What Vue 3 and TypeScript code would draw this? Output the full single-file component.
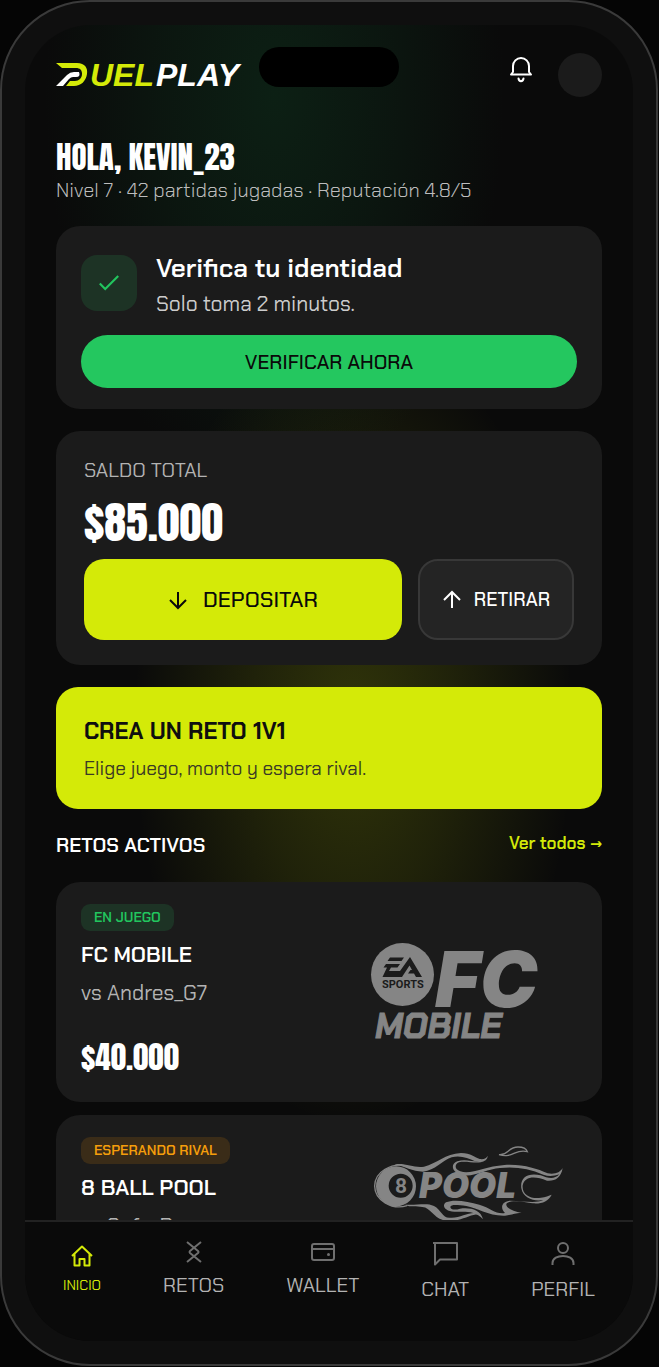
<script setup lang="ts">
import { ref } from 'vue'

interface Challenge {
  id: string
  status: string
  tone: 'live' | 'waiting'
  game: string
  rival: string
  amount?: string
}

interface NavItem {
  id: string
  label: string
}

const challenges: Challenge[] = [
  { id: 'fc', status: 'EN JUEGO', tone: 'live', game: 'FC MOBILE', rival: 'vs Andres_G7', amount: '$40.000' },
  { id: 'pool', status: 'ESPERANDO RIVAL', tone: 'waiting', game: '8 BALL POOL', rival: 'vs Sofa_Rey' },
]

const navItems: NavItem[] = [
  { id: 'inicio', label: 'INICIO' },
  { id: 'retos', label: 'RETOS' },
  { id: 'wallet', label: 'WALLET' },
  { id: 'chat', label: 'CHAT' },
  { id: 'perfil', label: 'PERFIL' },
]

const active = ref('inicio')
</script>

<template>
  <div class="phone">
    <div class="screen">
      <div class="island"></div>
      <main class="content">
        <header class="topbar">
          <svg class="brand" viewBox="0 -7 196 44" role="img" aria-label="DuelPlay">
            <path class="lime" d="M0 3H21C29 3 32 8 31 14C30 21 25 26 18 26H10L14 21H19C23 21 26 18 26 14C26 10 24 8 20 8H6Z" />
            <path class="white" d="M0 26L11 15Q14 12 18 12H23Q25 17 20 17H17Q15 17 13 19L7 26Z" />
            <text class="lime wordmark" x="34" y="26">UEL</text>
            <text class="white wordmark" x="100" y="26">PLAY</text>
          </svg>
          <div class="tools">
            <button class="bell" type="button" aria-label="Notificaciones">
              <svg viewBox="0 0 26 28">
                <path d="M3 19.500L5 17V11A8 8 0 0 1 21 11V17L23 19.500Z" />
                <path d="M10.500 23.500C11 27 15 27 15.500 23.500" />
              </svg>
            </button>
            <button class="avatar" type="button" aria-label="Cuenta"></button>
          </div>
        </header>

        <section class="hello">
          <h1>HOLA, KEVIN_23</h1>
          <p>Nivel 7 · 42 partidas jugadas · Reputación 4.8/5</p>
        </section>

        <section class="card verify">
          <div class="verify-row">
            <span class="check">
              <svg viewBox="0 0 24 24"><path d="M3.500 12.500L8.500 17.500L20.500 5.500" /></svg>
            </span>
            <div>
              <h2>Verifica tu identidad</h2>
              <p>Solo toma 2 minutos.</p>
            </div>
          </div>
          <button class="pill" type="button">VERIFICAR AHORA</button>
        </section>

        <section class="card balance">
          <p class="label">SALDO TOTAL</p>
          <p class="total">$85.000</p>
          <div class="actions">
            <button class="deposit" type="button">
              <svg viewBox="0 0 20 20"><path d="M10 2V18M2 10L10 18L18 10" /></svg>
              DEPOSITAR
            </button>
            <button class="withdraw" type="button">
              <svg viewBox="0 0 20 20"><path d="M10 18V2M2 10L10 2L18 10" /></svg>
              RETIRAR
            </button>
          </div>
        </section>

        <button class="create" type="button">
          <strong>CREA UN RETO 1V1</strong>
          <span>Elige juego, monto y espera rival.</span>
        </button>

        <div class="heading">
          <h2>RETOS ACTIVOS</h2>
          <a href="#retos">Ver todos →</a>
        </div>

        <div class="list">
          <article v-for="item in challenges" :key="item.id" class="card challenge">
            <div class="info">
              <span class="badge" :class="item.tone">{{ item.status }}</span>
              <h3>{{ item.game }}</h3>
              <p class="rival">{{ item.rival }}</p>
              <p v-if="item.amount" class="stake">{{ item.amount }}</p>
            </div>

            <svg v-if="item.id === 'fc'" class="art" viewBox="0 0 212 176" role="img" aria-label="EA Sports FC Mobile">
              <circle cx="37.500" cy="70.500" r="31.500" />
              <path class="cut" d="M25 53.500H39L36.500 57H22.500ZM21 60H35L32.500 63.500H26L24 67H35L45 53L57 73H51L49 69.500H43L45.500 66H47L44.500 61.500L37 73H17.500L22 63.500H18.500Z" />
              <text class="cut sports" x="17" y="84">SPORTS</text>
              <text class="fc" x="70" y="103">FC</text>
              <text class="mobile" x="10" y="134">MOBILE</text>
            </svg>

            <svg v-else class="art" viewBox="0 0 212 176" role="img" aria-label="8 Ball Pool">
              <g transform="scale(0.33333) translate(0 -6)">
                <path class="line" d="M124 93C80 82 29 110 29 153C29 195 80 226 126 212" />
                <path fill-rule="evenodd" d="M93 94A60 60 0 1 0 93 214A60 60 0 1 0 93 94ZM107 116A36 36 0 1 1 107 188A36 36 0 1 1 107 116Z" />
                <path d="M88 88C125 84 148 100 177 95C216 86 240 56 288 54C318 54 330 68 344 72C358 74 364 69 368 62C368 78 350 84 330 79C310 69 285 60 260 67C230 78 211 106 174 110C142 110 120 94 88 88Z" />
                <path d="M358 78C338 89 304 76 282 82C268 88 268 104 286 109C318 120 360 94 418 90C476 87 514 101 548 115C570 119 586 112 593 99C588 129 570 139 546 137C510 122 479 123 473 151C470 181 500 193 528 188C541 187 552 182 560 179C549 200 530 207 503 205C476 199 430 193 424 207C422 220 444 228 470 234C446 234 450 238 420 242C372 244 336 218 304 213C276 210 258 208 256 216C256 224 270 226 285 221C314 217 347 223 354 253C329 224 296 231 268 230C238 228 230 211 243 202C265 192 309 199 343 209C377 219 393 239 420 234C402 215 414 198 436 197C472 197 510 207 535 195C509 200 474 191 469 160C464 126 491 112 527 121C549 130 568 134 583 118C565 124 551 125 535 119C493 101 451 94 405 99C365 101 322 131 285 118C259 110 257 86 277 79C306 70 328 85 358 78Z" />
                <path d="M120 209C155 212 184 202 207 213C230 225 232 251 257 248C290 250 318 224 347 239C323 233 292 259 255 257C207 260 202 218 172 216C154 212 138 218 120 209Z" />
                <path class="line" d="M402 59C430 62 428 36 459 36C475 36 484 41 487 50C451 39 445 72 402 59Z" />
              </g>
              <text class="eight" x="30" y="56">8</text>
              <text class="pool" x="54" y="61">POOL</text>
            </svg>
          </article>
        </div>
      </main>

      <nav class="nav" aria-label="Principal">
        <button
          v-for="item in navItems"
          :key="item.id"
          type="button"
          :class="[item.id, { active: active === item.id }]"
          @click="active = item.id"
        >
          <svg v-if="item.id === 'inicio'" viewBox="0 0 24 24"><path d="M2 12L12 2.500L22 12M4.500 10V21.500H9.500V15H14.500V21.500H19.500V10" /></svg>
          <svg v-else-if="item.id === 'retos'" viewBox="0 0 24 24"><path d="M5 2L16 11Q17 12 16 13L5 22M19 2L8 11Q7 12 8 13L19 22" /></svg>
          <svg v-else-if="item.id === 'wallet'" viewBox="0 0 24 24"><rect x="1" y="4" width="22" height="16" rx="2" /><path d="M1 9H23" /><circle class="dot" cx="17.500" cy="14.500" r="1.500" /></svg>
          <svg v-else-if="item.id === 'chat'" viewBox="0 0 28 28"><path d="M2 3H26V19.500H9L4 24.500V3" /></svg>
          <svg v-else viewBox="0 0 28 28"><circle cx="14" cy="8" r="5" /><path d="M3.500 25V23C3.500 13.500 24.500 13.500 24.500 23V25" /></svg>
          <span>{{ item.label }}</span>
        </button>
      </nav>
    </div>
  </div>
</template>

<style>
body {
  margin: 0;
  background: #050505;
}
</style>

<style scoped>
* {
  box-sizing: border-box;
}

h1,
h2,
h3,
p {
  margin: 0;
}

button {
  border: 0;
  padding: 0;
  background: none;
  color: inherit;
  font: inherit;
  cursor: pointer;
}

svg {
  display: block;
  flex: none;
}

.phone {
  height: calc(100vh - 1px);
  margin-right: 1px;
  padding: 23px;
  border: 2px solid #3a3a3a;
  border-radius: 90px;
  background: #0f0f0f;
  color: #fff;
  font-family: "Chakra Petch", Roboto, "Liberation Sans", sans-serif;
}

.screen {
  position: relative;
  display: flex;
  flex-direction: column;
  height: 100%;
  overflow: hidden;
  border-radius: 66px;
  background:
    radial-gradient(ellipse 220px 400px at 54% 700px, rgba(212, 234, 8, 0.19), rgba(212, 234, 8, 0.11) 45%, transparent),
    radial-gradient(ellipse 230px 400px at 41% 70px, rgba(16, 70, 38, 0.36), rgba(16, 70, 38, 0.2) 50%, transparent),
    #0a0a0a;
}

.island {
  position: absolute;
  top: 22px;
  left: 50%;
  width: 140px;
  height: 40px;
  margin-left: -70px;
  border-radius: 20px;
  background: #000;
}

.content {
  flex: 1;
  min-height: 0;
  overflow: hidden;
  padding: 28px 31px 0;
}

.topbar {
  display: flex;
  align-items: center;
  justify-content: space-between;
}

.brand {
  width: 196px;
  height: 44px;
}

.lime {
  fill: #d4ea08;
}

.white {
  fill: #fff;
}

.wordmark {
  font: italic 700 32px "Liberation Sans", Arial, sans-serif;
}

.tools {
  display: flex;
  gap: 24px;
}

.bell {
  width: 26px;
  height: 32px;
}

.bell svg {
  width: 26px;
  height: 28px;
  fill: none;
  stroke: #fff;
  stroke-width: 2;
  stroke-linecap: round;
  stroke-linejoin: round;
}

.avatar {
  width: 44px;
  height: 44px;
  border-radius: 50%;
  background: #1b1b1b;
}

h1,
.total,
.stake {
  font-family: Anton, "Liberation Sans Narrow", "Liberation Sans", sans-serif;
  font-weight: 400;
}

.hello {
  margin-top: 40px;
}

h1 {
  font-size: 31px;
  line-height: 40px;
}

.hello p {
  color: #bdbdbd;
  font-size: 20px;
  font-weight: 300;
  line-height: 26px;
}

.card {
  border-radius: 24px;
  background: #1b1b1b;
}

.verify {
  margin-top: 23px;
  padding: 24px 25px 21px;
}

.verify-row {
  display: flex;
  align-items: flex-start;
  gap: 19px;
}

.check {
  display: grid;
  place-items: center;
  width: 56px;
  height: 56px;
  margin-top: 5px;
  border-radius: 16px;
  background: #1d3325;
}

.check svg {
  width: 26px;
  height: 26px;
  fill: none;
  stroke: #22c55e;
  stroke-width: 2;
}

.verify h2 {
  font-size: 26px;
  font-weight: 600;
  line-height: 36px;
}

.verify p {
  color: #ccc;
  font-size: 21px;
  line-height: 36px;
}

.pill {
  display: block;
  width: 100%;
  height: 53px;
  margin-top: 13px;
  border-radius: 27px;
  background: #24c75f;
  color: #0a0a0a;
  font-size: 20px;
  font-weight: 500;
}

.balance {
  margin-top: 22px;
  padding: 26px 28px 25px;
}

.label {
  color: #b3b3b3;
  font-size: 20px;
  line-height: 26px;
}

.total {
  margin: 16px 0 14px;
  font-size: 44px;
  line-height: 46px;
}

.actions {
  display: grid;
  grid-template-columns: 318fr 156fr;
  gap: 16px;
}

.actions button {
  display: flex;
  align-items: center;
  justify-content: center;
  height: 81px;
  border-radius: 20px;
}

.actions svg {
  width: 20px;
  height: 20px;
  fill: none;
  stroke: currentColor;
  stroke-width: 2;
}

.actions .deposit {
  gap: 15px;
  background: #d4ea08;
  color: #0a0a0a;
  font-size: 22px;
  font-weight: 500;
}

.actions .withdraw {
  gap: 12px;
  border: 2px solid #383838;
  background: #242424;
  font-size: 19px;
  font-weight: 500;
}

.create {
  display: block;
  width: 100%;
  margin-top: 22px;
  padding: 28px;
  border-radius: 22px;
  background: #d4ea08;
  color: #0f0f0f;
  text-align: left;
}

.create strong,
.create span {
  display: block;
}

.create strong {
  font-size: 23px;
  font-weight: 700;
  line-height: 32px;
}

.create span {
  margin-top: 9px;
  color: #3b3b24;
  font-size: 19px;
  line-height: 25px;
}

.heading {
  display: flex;
  justify-content: space-between;
  margin-top: 21px;
}

.heading h2 {
  font-size: 20px;
  font-weight: 600;
  line-height: 30px;
}

.heading a {
  color: #d4ea08;
  font-size: 17px;
  font-weight: 600;
  line-height: 26px;
  text-decoration: none;
}

.list {
  display: grid;
  gap: 13px;
  margin-top: 22px;
}

.challenge {
  display: flex;
  justify-content: space-between;
  height: 220px;
  padding: 22px 25px;
}

.badge {
  display: inline-block;
  padding: 0 13px;
  border-radius: 9px;
  font-size: 14px;
  font-weight: 600;
  line-height: 27px;
}

.live {
  background: #1d3325;
  color: #22c55e;
}

.waiting {
  background: #3a2c18;
  color: #f59e0b;
}

.challenge h3 {
  margin-top: 8px;
  font-size: 22px;
  font-weight: 600;
  line-height: 32px;
}

.rival {
  margin-top: 10px;
  color: #b3b3b3;
  font-size: 21px;
  line-height: 24px;
}

.stake {
  margin-top: 32px;
  font-size: 31px;
  line-height: 40px;
}

.art {
  width: 212px;
  height: 176px;
  fill: #858585;
}

.art .cut {
  fill: #1b1b1b;
}

.art .line {
  fill: none;
  stroke: #858585;
  stroke-width: 4;
}

.sports {
  font: 700 11px Roboto, sans-serif;
}

.fc {
  font: italic 900 77px Inter, sans-serif;
}

.mobile {
  font: italic 700 35px "Chakra Petch", Inter, sans-serif;
  stroke: #858585;
  stroke-width: 1;
}

.pool {
  font: italic 900 35px Inter, sans-serif;
}

.eight {
  font: 700 21px Roboto, sans-serif;
}

.nav {
  display: flex;
  justify-content: space-between;
  height: 121px;
  padding: 18px 38px 0;
  border-top: 2px solid #222;
  background: #0a0a0a;
}

.nav button {
  display: flex;
  flex-direction: column;
  align-items: center;
  align-self: flex-start;
  gap: 8px;
  color: #6f6f6f;
  font-size: 20px;
  line-height: 26px;
}

.nav svg {
  width: 24px;
  height: 24px;
  fill: none;
  stroke: currentColor;
  stroke-width: 2;
  stroke-linejoin: round;
}

.nav span {
  color: #b3b3b3;
}

.nav .dot {
  fill: currentColor;
  stroke: none;
}

.nav .chat svg,
.nav .perfil svg {
  width: 28px;
  height: 28px;
}

.nav .inicio {
  gap: 4px;
  padding-top: 4px;
  font-size: 14px;
}

.nav .active,
.nav .active span {
  color: #d4ea08;
}
</style>
